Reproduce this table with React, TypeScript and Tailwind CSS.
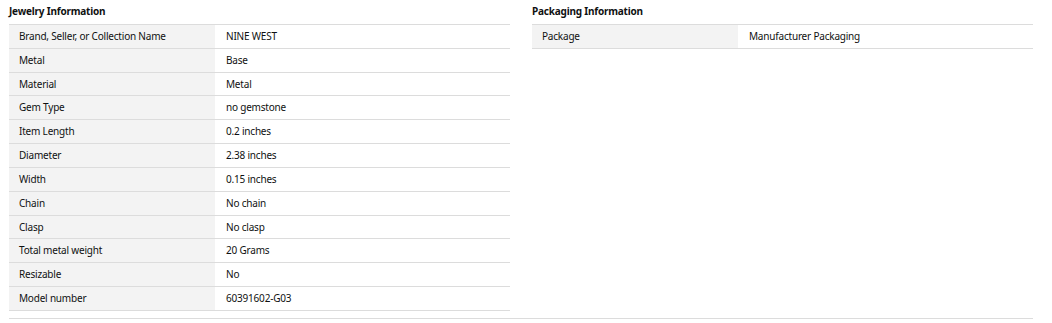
import React from "react";

const jewelry: [string, string][] = [
  ["Brand, Seller, or Collection Name", "NINE WEST"],
  ["Metal", "Base"],
  ["Material", "Metal"],
  ["Gem Type", "no gemstone"],
  ["Item Length", "0.2 inches"],
  ["Diameter", "2.38 inches"],
  ["Width", "0.15 inches"],
  ["Chain", "No chain"],
  ["Clasp", "No clasp"],
  ["Total metal weight", "20 Grams"],
  ["Resizable", "No"],
  ["Model number", "60391602-G03"],
];

const packaging: [string, string][] = [["Package", "Manufacturer Packaging"]];

function Table({ title, rows }: { title: string; rows: [string, string][] }) {
  return (
    <div className="w-[501px]">
      <div className="h-[24px] pt-[4px] text-[10px] font-bold leading-[14px] tracking-[-0.2px] text-[#0f1111]">{title}</div>
      <div className="border-t border-[#dcdcdc]">
        {rows.map(([k, v]) => (
          <div key={k} className="flex h-[23.83px] border-b border-[#dcdcdc] text-[10px] tracking-[-0.2px] text-[#0f1111]">
            <div className="flex w-[206px] items-center bg-[#f3f3f3] pl-[10px]">{k}</div>
            <div className="flex flex-1 items-center pl-[11px]">{v}</div>
          </div>
        ))}
      </div>
    </div>
  );
}

export default function App() {
  return (
    <div
      className="h-[323px] w-[1052px] bg-white pl-[9px]"
      style={{ fontFamily: '"Noto Sans", "Open Sans", sans-serif' }}
    >
      <div className="flex w-[1024px] gap-[22px]">
        <Table title="Jewelry Information" rows={jewelry} />
        <Table title="Packaging Information" rows={packaging} />
      </div>
      <div className="mt-[7px] w-[1024px] border-t border-[#dcdcdc]" />
    </div>
  );
}
